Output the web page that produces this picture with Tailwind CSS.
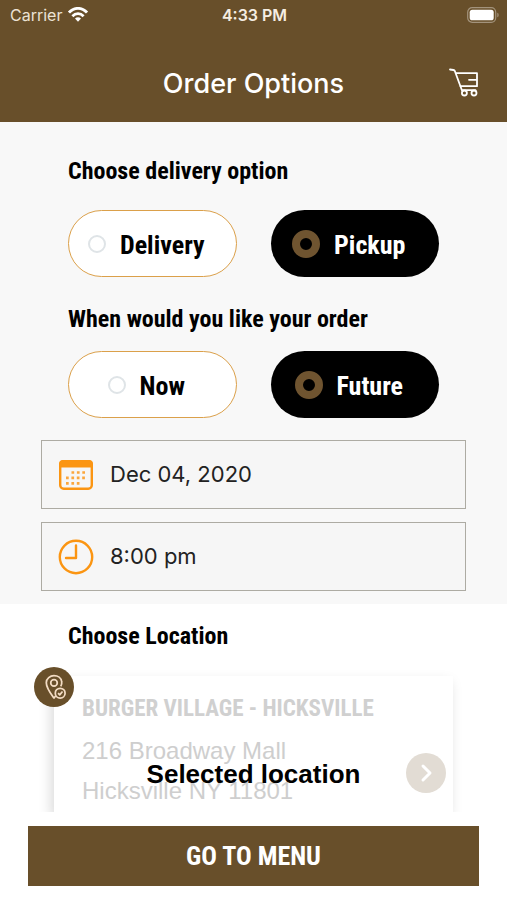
<!DOCTYPE html>
<html lang="en">
<head>
<meta charset="utf-8">
<meta name="viewport" content="width=device-width, initial-scale=1">
<title>Order Options</title>
<script src="https://cdn.jsdelivr.net/npm/@tailwindcss/browser@4"></script>
</head>
<body class="flex min-h-screen flex-col bg-white font-['Roboto_Condensed','Liberation_Sans',sans-serif] text-black">
<header class="bg-[#684f2a] font-[Inter,sans-serif] text-white">
  <div class="grid h-[30px] grid-cols-3 items-center pr-2 pl-[10px] text-base">
    <div class="flex items-center gap-[6px] text-[#ece2d4]">
      <span>Carrier</span>
      <svg class="h-4 w-5" viewBox="0 0 20 16" fill="none" stroke="#fff" stroke-width="2.8" aria-hidden="true">
        <path d="M1 5.6C6-.1 14-.1 19 5.6"/><path d="M4.4 9.2c3.2-3.3 8-3.3 11.2 0"/><path d="M7 11.6c1.8-1.7 4.2-1.7 6 0l-3 3.2z" fill="#fff" stroke="none"/>
      </svg>
    </div>
    <div class="text-center font-semibold text-[#f5ede2]">4:33 PM</div>
    <div class="flex justify-end">
      <svg class="h-4 w-8" viewBox="0 0 32 16" aria-hidden="true">
        <rect x=".7" y=".7" width="28" height="14.6" rx="4.5" fill="none" stroke="#a3937c" stroke-width="1.2"/>
        <rect x="2.7" y="2.7" width="24" height="10.6" rx="2.6" fill="#fff"/>
        <path d="M30.3 5.7c1.8.5 1.8 4.100 0 4.600z" fill="#a3937c"/>
      </svg>
    </div>
  </div>
  <div class="grid h-[92px] grid-cols-[1fr_auto_1fr] items-center px-7">
    <h1 class="col-start-2 mt-4 text-[27px] leading-8 font-medium">Order Options</h1>
    <button type="button" aria-label="Cart" class="mt-[14px] justify-self-end">
      <svg class="h-[30px] w-[30px]" viewBox="0 0 30 30" fill="none" stroke="#fff" stroke-width="1.8" stroke-linejoin="round" stroke-linecap="round" aria-hidden="true">
        <path d="M1 1.500l3.400.5c.8.1 1.200.5 1.500 1.200L12.900 22.200H26.500"/><path d="M7 5.200H28V18.200H11.600M28 11.800h-8"/>
        <circle cx="15.400" cy="25" r="2.500"/><circle cx="25" cy="25" r="2.500"/>
      </svg>
    </button>
  </div>
</header>
<main class="flex flex-1 flex-col">
  <section class="bg-[#f8f8f8] pb-[13px]">
    <fieldset class="px-[68px] pt-[33px]">
      <legend class="contents"><span class="block text-2xl leading-8 font-bold">Choose delivery option</span></legend>
      <div class="mt-[23px] grid grid-cols-2 gap-[34px]">
        <label class="flex h-[67px] items-center justify-center gap-[14px] rounded-full border border-[#dba04a] bg-white pr-3 text-[26px] font-bold">
          <input type="radio" name="mode" class="size-[18px] appearance-none rounded-full border-2 border-[#dfe4e7]"><span class="pt-1">Delivery</span>
        </label>
        <label class="flex h-[67px] items-center justify-center gap-[14px] rounded-full bg-black pr-3 text-[26px] font-bold text-white">
          <input type="radio" name="mode" checked class="size-7 appearance-none rounded-full border-8 border-[#6f5430]"><span class="pt-1">Pickup</span>
        </label>
      </div>
    </fieldset>
    <fieldset class="px-[68px] pt-[26px]">
      <legend class="contents"><span class="block text-2xl leading-8 font-bold">When would you like your order</span></legend>
      <div class="mt-4 grid grid-cols-2 gap-[34px]">
        <label class="flex h-[67px] items-center justify-center gap-[14px] rounded-full border border-[#dba04a] bg-white pr-3 text-[26px] font-bold">
          <input type="radio" name="when" class="size-[18px] appearance-none rounded-full border-2 border-[#dfe4e7]"><span class="pt-1">Now</span>
        </label>
        <label class="flex h-[67px] items-center justify-center gap-[14px] rounded-full bg-black pr-3 text-[26px] font-bold text-white">
          <input type="radio" name="when" checked class="size-7 appearance-none rounded-full border-8 border-[#6f5430]"><span class="pt-1">Future</span>
        </label>
      </div>
    </fieldset>
    <div class="mx-[41px] mt-[22px] flex flex-col gap-[13px] font-[Inter,sans-serif] text-[22px] text-[#222]">
      <label class="flex h-[69px] items-center gap-4 border border-[#adaba3] bg-[#f6f6f6] px-4">
        <svg class="size-9 shrink-0" viewBox="0 0 36 36" aria-hidden="true">
          <rect x="2.200" y="4.200" width="31.600" height="27.600" rx="3.500" fill="none" stroke="#fb9512" stroke-width="2.400"/>
          <path d="M1 10.500V7q0-4 4-4h26q4 0 4 4v3.500z" fill="#fb9512"/>
          <path d="M13.500 15.500H29M8 20.900H29M8 26.300H23" fill="none" stroke="#fba63c" stroke-width="2.700" stroke-dasharray="2.700 2.700"/>
        </svg>
        <input type="text" aria-label="Order date" value="Dec 04, 2020" class="min-w-0 flex-1 bg-transparent outline-none">
      </label>
      <label class="flex h-[69px] items-center gap-4 border border-[#adaba3] bg-[#f6f6f6] px-4">
        <svg class="size-9 shrink-0" viewBox="0 0 36 36" fill="none" stroke="#fb9512" stroke-width="2.400" aria-hidden="true">
          <circle cx="18" cy="18" r="16.200"/><path d="M18 6.500V19H8" stroke-linejoin="round" stroke-linecap="round"/>
        </svg>
        <input type="text" aria-label="Order time" value="8:00 pm" class="min-w-0 flex-1 bg-transparent outline-none">
      </label>
    </div>
  </section>
  <section class="overflow-hidden">
    <h2 class="px-[68px] pt-4 text-2xl leading-8 font-bold">Choose Location</h2>
    <div class="relative mx-[54px] mt-6 h-[136px] bg-white pt-[17px] pl-7 shadow-[-3px_6px_12px_#00000026]">
      <h3 class="text-[23px] leading-8 font-bold text-[#d0d0d0]">BURGER VILLAGE - HICKSVILLE</h3>
      <p class="mt-[6px] font-['Liberation_Sans',sans-serif] text-[24px] leading-10 text-[#cecece]">216 Broadway Mall<br>Hicksville NY 11801</p>
      <span class="absolute -top-[9px] -left-5 flex size-10 items-center justify-center rounded-full bg-[#684f2a]">
        <svg class="size-7" viewBox="0 0 24 24" fill="none" stroke="#f3dcc4" stroke-width="1.500" stroke-linejoin="round" aria-hidden="true">
          <path d="M17.800 11.500c.8-1.500 1-2.700.8-4C18.200 4.300 15.300 2.300 12 2.300S5.400 4.700 5.400 8.300c0 4.500 3.300 8.700 6.600 13.200l1.400-1.800"/>
          <circle cx="12" cy="8.500" r="2.800"/><circle cx="17.300" cy="17.300" r="4.200"/><path d="M15.500 17.300l1.400 1.400 2.400-2.800"/>
        </svg>
      </span>
      <p class="absolute inset-x-0 top-[82px] text-center font-['Liberation_Sans',sans-serif] text-[26px] leading-8 font-bold">Selected location</p>
      <button type="button" aria-label="Open location" class="absolute top-[77px] right-[7px] flex size-10 items-center justify-center rounded-full bg-[#e2dcd4]">
        <svg class="size-6" viewBox="0 0 24 24" fill="none" stroke="#fff" stroke-width="3" stroke-linecap="round" stroke-linejoin="round" aria-hidden="true"><path d="M9 5l7 7-7 7"/></svg>
      </button>
    </div>
  </section>
  <div class="px-7 pt-[14px] pb-[13px]">
    <button type="button" class="h-[60px] w-full bg-[#684f2a] text-[26px] font-bold text-white">GO TO MENU</button>
  </div>
</main>
</body>
</html>
